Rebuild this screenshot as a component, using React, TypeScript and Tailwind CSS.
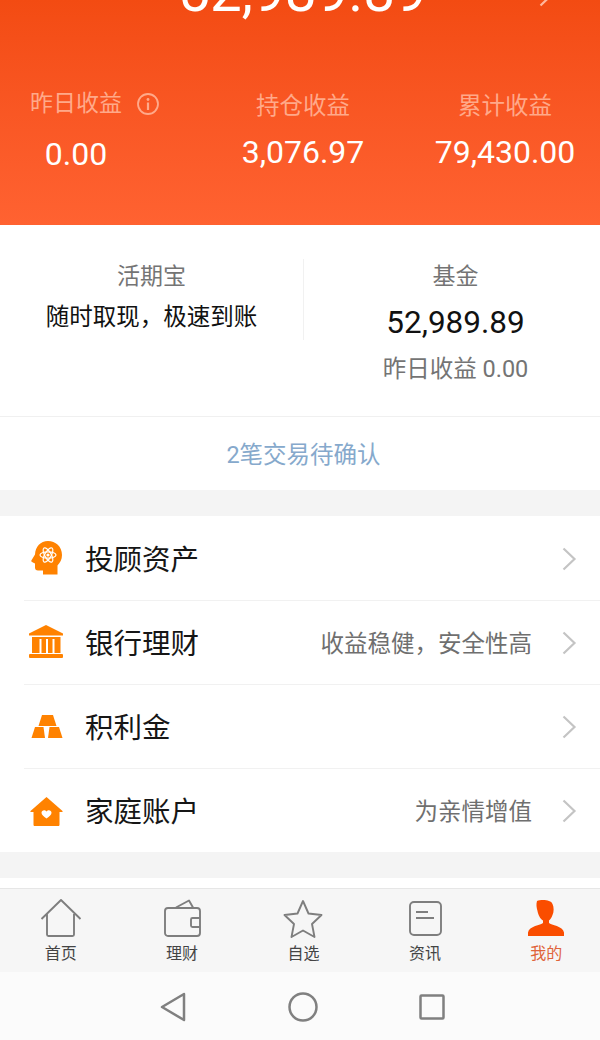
import type { ReactNode } from 'react';

const FONT = "font-['Roboto','Noto_Sans_CJK_SC',sans-serif]";

function Chevron() {
  return (
    <svg width="16" height="26" viewBox="0 0 16 26" fill="none" className="shrink-0">
      <path d="M2.5 2.5 13.5 13 2.5 23.5" stroke="#c4c4c4" strokeWidth="2.2" />
    </svg>
  );
}

function HeadIcon() {
  return (
    <svg width="36" height="36" viewBox="0 0 36 36">
      <path
        d="M20 0c7.500 0 14 5.500 14 14 0 4.600-2 7.800-4.500 10.500V33.500H15V29.500H10c-2 0-3-1.200-3-3V22.500L4 21c-.8-.4-.9-1-.5-1.700L7 13.500C7.500 5.500 12.500 0 20 0Z"
        fill="#ff8200"
      />
      <g fill="none" stroke="#fff" strokeWidth="1.200">
        <ellipse cx="20" cy="14" rx="8" ry="3.200" />
        <ellipse cx="20" cy="14" rx="8" ry="3.200" transform="rotate(60 20 14)" />
        <ellipse cx="20" cy="14" rx="8" ry="3.200" transform="rotate(120 20 14)" />
      </g>
      <circle cx="20" cy="14" r="1.600" fill="#fff" />
    </svg>
  );
}

function BankIcon() {
  return (
    <svg width="36" height="36" viewBox="0 0 36 36" fill="#ff8200">
      <path d="M18 0 35 8.500V10.500H1V8.500Z" />
      <rect x="4" y="12" width="28" height="2" />
      <rect x="4" y="12" width="7.500" height="16" />
      <rect x="13.500" y="12" width="4.500" height="16" />
      <rect x="20" y="12" width="4.500" height="16" />
      <rect x="26.500" y="12" width="6" height="16" />
      <rect x="1" y="29" width="34" height="4" rx="1" />
    </svg>
  );
}

function GoldIcon() {
  return (
    <svg width="36" height="36" viewBox="0 0 36 36" fill="#ff8200">
      <path d="M14 6h11l3.500 11H10.500Z" strokeLinejoin="round" />
      <path d="M7 18h8.500L17 29H3.500Z" />
      <path d="M21.500 18H31L34.500 29H20Z" />
    </svg>
  );
}

function HouseIcon() {
  return (
    <svg width="36" height="36" viewBox="0 0 36 36">
      <path
        d="M18.500 4 34.500 18c.3.500 0 1-.5 1H31.500V31.800c0 .8-.5 1.200-1.300 1.200H6.800C6 33 5.500 32.600 5.500 31.800V19H3c-.5 0-.8-.5-.5-1Z"
        fill="#ff8200"
      />
      <path
        d="M18.500 25.500c-3-2.300-5-3.800-5-5.800 0-2.700 3.500-3.500 5-1.200 1.500-2.300 5-1.500 5 1.200 0 2-2 3.500-5 5.800Z"
        fill="#fff"
      />
    </svg>
  );
}

function TabIcon({ children }: { children: ReactNode }) {
  return (
    <svg width="42" height="40" viewBox="0 0 42 40" fill="none" stroke="#7e7e7e" strokeWidth="1.900" strokeLinejoin="round">
      {children}
    </svg>
  );
}

function Row({ icon, title, hint, last }: { icon: ReactNode; title: string; hint?: string; last?: boolean }) {
  return (
    <div className={`flex items-center pl-[24px] ${last ? 'h-[83px]' : 'h-[84px]'}`}>
      <div className={`flex h-full flex-1 items-center pr-[23px] ${last ? '' : 'border-b border-[#f1f1f1]'}`}>
        <div className="flex w-[61px] shrink-0 items-center">
          <div className="ml-[4px]">{icon}</div>
        </div>
        <span className="flex-1 pt-[5px] text-[28.500px] leading-none text-[#161616]">{title}</span>
        {hint && <span className="mr-[29px] pt-[4px] text-[23.500px] leading-none text-[#6f6f6f]">{hint}</span>}
        <Chevron />
      </div>
    </div>
  );
}

const tabs = [
  {
    label: '首页',
    icon: (
      <TabIcon>
        <path d="M1.500 20 21 1 40.500 20M7 15V35.500c0 1 .6 1.500 1.500 1.500h24c.9 0 1.500-.5 1.500-1.500V15" />
      </TabIcon>
    ),
  },
  {
    label: '理财',
    icon: (
      <TabIcon>
        <rect x="4" y="9" width="35" height="28" rx="3" />
        <path d="M39 19H31.500c-1 0-1.500.6-1.500 1.500v6c0 1 .5 1.500 1.500 1.500H39M15 8.500 28 1.500 32 8.500" />
      </TabIcon>
    ),
  },
  {
    label: '自选',
    icon: (
      <TabIcon>
        <path d="M21 2 26.500 14.500 39.500 16 30 25 32.500 38 21 31.500 9.500 38 12 25 2.500 16 15.500 14.500Z" />
      </TabIcon>
    ),
  },
  {
    label: '资讯',
    icon: (
      <TabIcon>
        <rect x="6" y="3" width="31" height="33" rx="4" />
        <path d="M12 13H24M12 19H30" />
      </TabIcon>
    ),
  },
  {
    label: '我的',
    active: true,
    icon: (
      <svg width="42" height="40" viewBox="0 0 42 40" fill="#fa4d00">
        <path d="M12 2c4-1.500 14-1.500 15.500 3 1.500 3 1.500 8 0 11-.8 2.500-2 4.500-3.500 5.500v2.500c2 2 14 3 15 9.500V37H3v-3.500c1-6.500 13-7.500 15-9.500v-2.500C15 20 13 15 12.500 12c-1-3-1.500-7-.5-10Z" />
      </svg>
    ),
  },
];

export default function App() {
  return (
    <div className={`flex h-[1040px] w-[600px] flex-col overflow-hidden bg-white ${FONT}`}>
      <header className="relative h-[225px] shrink-0 overflow-hidden bg-gradient-to-b from-[#f34b12] to-[#ff6231]">
        <div className="-mt-[41px] w-[605px] text-center text-[56.500px] leading-[66px] text-white">52,989.89</div>
        <svg width="16" height="26" viewBox="0 0 16 26" fill="none" className="absolute right-[46px] -top-[18px]">
          <path d="M2.500 2.500 13.500 13 2.500 23.500" stroke="#ffb79c" strokeWidth="2.200" />
        </svg>

        <div className="mt-[64px] flex">
          <div className="flex w-[152px] shrink-0 flex-col">
            <div className="flex items-center whitespace-nowrap pl-[30px] text-[23px] leading-[30px] text-[#ffa98a]">
              昨日收益
              <svg width="24" height="24" viewBox="0 0 24 24" fill="none" className="ml-[14px] shrink-0">
                <circle cx="12" cy="12" r="10" stroke="#ffa98a" strokeWidth="1.800" />
                <circle cx="12" cy="7.500" r="1.400" fill="#ffa98a" />
                <path d="M12 10.500V18" stroke="#ffa98a" strokeWidth="2.200" />
              </svg>
            </div>
            <div className="mt-[16px] text-center text-[32px] leading-[38px] text-white">0.00</div>
          </div>
          <div className="ml-[51px] mt-[2px] flex w-[200px] shrink-0 flex-col items-center">
            <div className="text-[23.500px] leading-[30px] text-[#ffa98a]">持仓收益</div>
            <div className="mt-[12px] text-[32px] leading-[38px] text-white">3,076.97</div>
          </div>
          <div className="mt-[2px] flex w-[204px] shrink-0 flex-col items-center">
            <div className="text-[23.500px] leading-[30px] text-[#ffa98a]">累计收益</div>
            <div className="mt-[12px] text-[32px] leading-[38px] text-white">79,430.00</div>
          </div>
        </div>
      </header>

      <section className="flex h-[192px] shrink-0 border-b border-[#f0f0f0]">
        <div className="mt-[34px] flex h-[81px] w-[304px] shrink-0 flex-col items-center border-r border-[#f1f1f1]">
          <div className="mt-[3px] text-[23px] leading-[30px] text-[#747474]">活期宝</div>
          <div className="mt-[10px] whitespace-nowrap text-[23.500px] leading-[30px] text-[#111]">随时取现，极速到账</div>
        </div>
        <div className="flex w-[303px] shrink-0 flex-col items-center pt-[37px]">
          <div className="text-[23px] leading-[30px] text-[#747474]">基金</div>
          <div className="mt-[12px] text-[31.500px] leading-[38px] text-[#111]">52,989.89</div>
          <div className="mt-[12px] whitespace-nowrap text-[23.500px] leading-[30px] text-[#747474]">昨日收益 0.00</div>
        </div>
      </section>

      <div className="flex h-[73px] w-[607px] shrink-0 items-center justify-center pt-[4px] text-[23.500px] text-[#86a9cc]">2笔交易待确认</div>

      <div className="h-[26px] shrink-0 bg-[#f4f4f4]" />

      <section className="shrink-0 pt-[1px]">
        <Row icon={<HeadIcon />} title="投顾资产" />
        <Row icon={<BankIcon />} title="银行理财" hint="收益稳健，安全性高" />
        <Row icon={<GoldIcon />} title="积利金" />
        <Row icon={<HouseIcon />} title="家庭账户" hint="为亲情增值" last />
      </section>

      <div className="h-[26px] shrink-0 bg-[#f4f4f4]" />
      <div className="h-[10px] shrink-0 bg-white" />

      <nav className="h-[84px] shrink-0 border-t border-[#e6e6e6] bg-[#f6f6f6]">
        <div className="grid w-[607px] grid-cols-5">
          {tabs.map((tab) => (
            <div key={tab.label} className="flex flex-col items-center pt-[10px]">
              {tab.icon}
              <span className={`mt-[4px] text-[16px] leading-[22px] ${tab.active ? 'text-[#e0643a]' : 'text-[#444]'}`}>
                {tab.label}
              </span>
            </div>
          ))}
        </div>
      </nav>

      <div className="flex flex-1 items-center bg-[#fbfbfb] pl-[108px] pt-[1px]">
        <div className="flex w-[130px] justify-center">
          <svg width="30" height="32" viewBox="0 0 30 32" fill="none">
            <path d="M26 3 4 16 26 29Z" stroke="#808080" strokeWidth="2.500" strokeLinejoin="round" />
          </svg>
        </div>
        <div className="flex w-[130px] justify-center">
          <svg width="30" height="30" viewBox="0 0 30 30" fill="none">
            <circle cx="15" cy="15" r="13.500" stroke="#808080" strokeWidth="2.500" />
          </svg>
        </div>
        <div className="flex w-[128px] justify-center">
          <svg width="26" height="26" viewBox="0 0 26 26" fill="none">
            <rect x="1.500" y="1.500" width="23" height="23" rx="1" stroke="#808080" strokeWidth="2.500" />
          </svg>
        </div>
      </div>
    </div>
  );
}
